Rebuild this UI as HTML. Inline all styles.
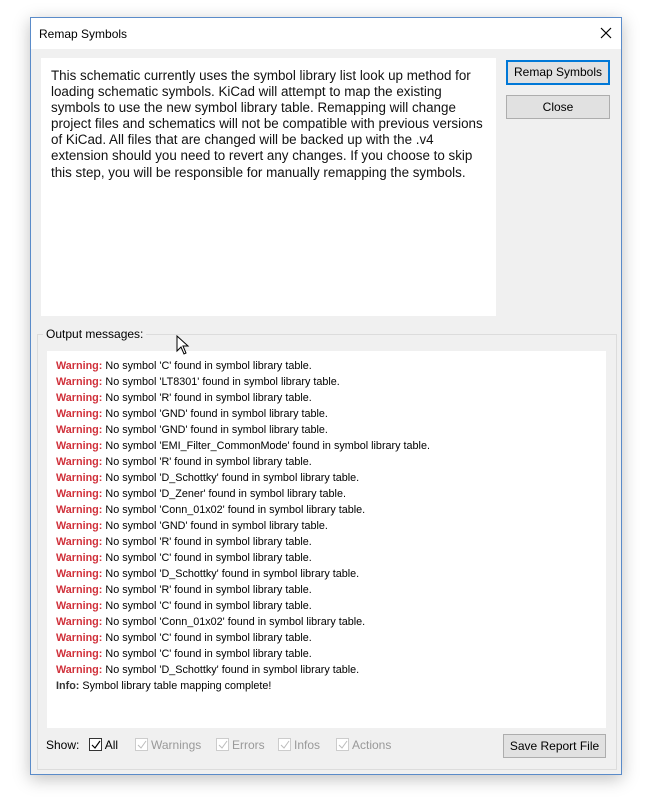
<!DOCTYPE html><html><head><style>
body{margin:0;width:655px;height:799px;background:#fff;position:relative;font-family:"Liberation Sans",sans-serif;overflow:hidden}
.win{position:absolute;left:30px;top:17px;width:590px;height:756px;border:1px solid #5a8bc9;background:#f0f0f0;box-shadow:0 4px 16px rgba(0,0,0,.25)}
.tb{position:absolute;left:0;top:0;right:0;height:31px;background:#fff;font-size:12px;}
.a{position:absolute}
.btn{position:absolute;background:#e1e1e1;border:1px solid #adadad;font-size:12px;text-align:center;box-sizing:border-box}
.msg{font-size:10.8px;line-height:16px;color:#000}
.msg b{color:#d0303a}
.cb{display:inline-block;width:13px;height:13px;border:1px solid #ccc;box-sizing:border-box;vertical-align:-2px;margin-right:3px;position:relative;background:#fff}
.opt{position:absolute;top:720px;font-size:12px;color:#999}
</style></head><body>
<div class="win">
<div class="tb"><span class="a" style="left:8px;top:9px">Remap Symbols</span>
<svg class="a" style="left:569px;top:9px" width="12" height="12"><path d="M1 1L11 11M11 1L1 11" stroke="#000" stroke-width="1.2"/></svg></div>
<div class="a" style="left:10px;top:40px;width:455px;height:258px;background:#fff;font-size:13.4px;line-height:16.1px;color:#111;padding:10px 0 0 10px;box-sizing:border-box;white-space:nowrap;overflow:hidden">This schematic currently uses the symbol library list look up method for<br>loading schematic symbols. KiCad will attempt to map the existing<br>symbols to use the new symbol library table. Remapping will change<br>project files and schematics will not be compatible with previous versions<br>of KiCad. All files that are changed will be backed up with the .v4<br>extension should you need to revert any changes. If you choose to skip<br>this step, you will be responsible for manually remapping the symbols.</div>
<div class="btn" style="left:475px;top:42px;width:104px;height:25px;border:2px solid #0078d7;line-height:21px">Remap Symbols</div>
<div class="btn" style="left:475px;top:77px;width:104px;height:24px;line-height:22px">Close</div>
<div class="a" style="left:6px;top:316px;width:578px;height:434px;border:1px solid #dcdcdc"></div>
<div class="a" style="left:12px;top:309px;background:#f0f0f0;padding:0 3px;font-size:12px">Output messages:</div>
<div class="a msg" style="left:16px;top:333px;width:559px;height:377px;background:#fff;padding:7px 0 0 9px;box-sizing:border-box">
<b>Warning:</b> No symbol 'C' found in symbol library table.<br>
<b>Warning:</b> No symbol 'LT8301' found in symbol library table.<br>
<b>Warning:</b> No symbol 'R' found in symbol library table.<br>
<b>Warning:</b> No symbol 'GND' found in symbol library table.<br>
<b>Warning:</b> No symbol 'GND' found in symbol library table.<br>
<b>Warning:</b> No symbol 'EMI_Filter_CommonMode' found in symbol library table.<br>
<b>Warning:</b> No symbol 'R' found in symbol library table.<br>
<b>Warning:</b> No symbol 'D_Schottky' found in symbol library table.<br>
<b>Warning:</b> No symbol 'D_Zener' found in symbol library table.<br>
<b>Warning:</b> No symbol 'Conn_01x02' found in symbol library table.<br>
<b>Warning:</b> No symbol 'GND' found in symbol library table.<br>
<b>Warning:</b> No symbol 'R' found in symbol library table.<br>
<b>Warning:</b> No symbol 'C' found in symbol library table.<br>
<b>Warning:</b> No symbol 'D_Schottky' found in symbol library table.<br>
<b>Warning:</b> No symbol 'R' found in symbol library table.<br>
<b>Warning:</b> No symbol 'C' found in symbol library table.<br>
<b>Warning:</b> No symbol 'Conn_01x02' found in symbol library table.<br>
<b>Warning:</b> No symbol 'C' found in symbol library table.<br>
<b>Warning:</b> No symbol 'C' found in symbol library table.<br>
<b>Warning:</b> No symbol 'D_Schottky' found in symbol library table.<br>
<b style="color:#333">Info:</b> Symbol library table mapping complete!</div>
<div class="opt" style="left:15px;color:#000">Show: <span class="cb" style="border-color:#333;margin-left:6px"><svg class="a" style="left:1px;top:1px" width="10" height="10"><path d="M1 5L4 8L9 1" stroke="#000" fill="none" stroke-width="1.2"/></svg></span>All</div>
<div class="opt" style="left:104px"><span class="cb"><svg class="a" style="left:1px;top:1px" width="10" height="10"><path d="M1 5L4 8L9 1" stroke="#bbb" fill="none"/></svg></span>Warnings</div>
<div class="opt" style="left:185px"><span class="cb"><svg class="a" style="left:1px;top:1px" width="10" height="10"><path d="M1 5L4 8L9 1" stroke="#bbb" fill="none"/></svg></span>Errors</div>
<div class="opt" style="left:247px"><span class="cb"><svg class="a" style="left:1px;top:1px" width="10" height="10"><path d="M1 5L4 8L9 1" stroke="#bbb" fill="none"/></svg></span>Infos</div>
<div class="opt" style="left:305px"><span class="cb"><svg class="a" style="left:1px;top:1px" width="10" height="10"><path d="M1 5L4 8L9 1" stroke="#bbb" fill="none"/></svg></span>Actions</div>
<div class="btn" style="left:472px;top:716px;width:103px;height:24px;line-height:22px">Save Report File</div>
</div>
<svg class="a" style="left:176px;top:335px" width="14" height="20"><path d="M1 1L1 16L5 12L8 19L10 18L7 11L12 11Z" fill="#fff" stroke="#000"/></svg>
</body></html>
